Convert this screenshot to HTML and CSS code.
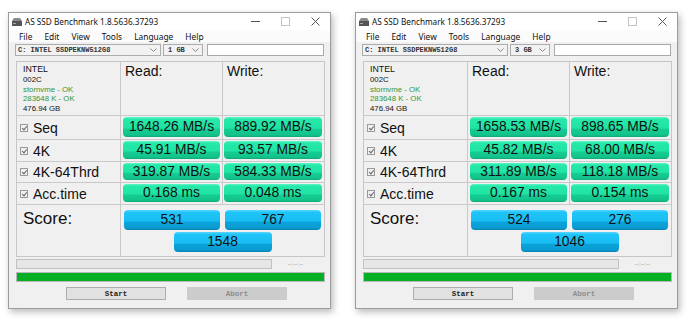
FILE: index.html
```html
<!DOCTYPE html>
<html>
<head>
<meta charset="utf-8">
<link rel="stylesheet" href="styles.css">
</head>
<body>
<div class="page">
  <div class="win">
    <div class="titlebar">
      <svg class="appicon" width="10" height="8" viewBox="0 0 10 8"><polygon points="2,0 8,0 10,3 0,3" fill="#8a8a8a"/><rect x="0" y="3" width="10" height="5" fill="#555"/><rect x="1" y="5" width="3" height="1" fill="#aaa"/></svg>
      <span class="title">AS SSD Benchmark 1.8.5636.37293</span>
      <div class="ctrls">
        <span class="ctl"><svg width="9" height="9" viewBox="0 0 9 9"><line x1="0" y1="4.5" x2="9" y2="4.5" stroke="#555" stroke-width="1"/></svg></span>
        <span class="ctl"><svg width="9" height="9" viewBox="0 0 9 9"><rect x="0.5" y="0.5" width="8" height="8" fill="none" stroke="#c4c4c4" stroke-width="1"/></svg></span>
        <span class="ctl"><svg width="9" height="9" viewBox="0 0 9 9"><path d="M0.5 0.5 L8.5 8.5 M8.5 0.5 L0.5 8.5" stroke="#555" stroke-width="1"/></svg></span>
      </div>
    </div>
    <div class="menubar"><span>File</span><span>Edit</span><span>View</span><span>Tools</span><span>Language</span><span>Help</span></div>
    <div class="body">
      <div class="selrow">
        <div class="sel drive"><span>C: INTEL SSDPEKNW512G8</span><svg class="chev" width="7" height="4" viewBox="0 0 7 4"><path d="M0.5 0.5 L3.5 3.5 L6.5 0.5" fill="none" stroke="#888" stroke-width="1"/></svg></div>
        <div class="sel size"><span>1 GB</span><svg class="chev" width="7" height="4" viewBox="0 0 7 4"><path d="M0.5 0.5 L3.5 3.5 L6.5 0.5" fill="none" stroke="#888" stroke-width="1"/></svg></div>
        <div class="textbox"></div>
      </div>
      <div class="panel">
        <div class="info">
          <div class="i1">INTEL</div>
          <div class="i2">002C</div>
          <div class="i2 ok">stornvme - OK</div>
          <div class="i2 ok">283648 K - OK</div>
          <div class="i2">476.94 GB</div>
        </div>
        <div class="hdr">Read:</div>
        <div class="hdr">Write:</div>
        <div class="label"><i class="cb"></i>Seq</div>
        <div class="cell"><div class="bar g">1648.26 MB/s</div></div>
        <div class="cell"><div class="bar g">889.92 MB/s</div></div>
        <div class="label"><i class="cb"></i>4K</div>
        <div class="cell"><div class="bar g">45.91 MB/s</div></div>
        <div class="cell"><div class="bar g">93.57 MB/s</div></div>
        <div class="label"><i class="cb"></i>4K-64Thrd</div>
        <div class="cell"><div class="bar g">319.87 MB/s</div></div>
        <div class="cell"><div class="bar g">584.33 MB/s</div></div>
        <div class="label"><i class="cb"></i>Acc.time</div>
        <div class="cell"><div class="bar g">0.168 ms</div></div>
        <div class="cell"><div class="bar g">0.048 ms</div></div>
        <div class="label score">Score:</div>
        <div class="scorecell">
          <div class="scoretop"><div class="bar b">531</div><div class="bar b">767</div></div>
          <div class="bar b total">1548</div>
        </div>
      </div>
      <div class="progrow"><div class="prog"></div><span class="eta">--:--:--</span></div>
      <div class="greenbar"></div>
      <div class="btnrow"><div class="btn">Start</div><div class="btn dis">Abort</div></div>
    </div>
  </div>

  <div class="win">
    <div class="titlebar">
      <svg class="appicon" width="10" height="8" viewBox="0 0 10 8"><polygon points="2,0 8,0 10,3 0,3" fill="#8a8a8a"/><rect x="0" y="3" width="10" height="5" fill="#555"/><rect x="1" y="5" width="3" height="1" fill="#aaa"/></svg>
      <span class="title">AS SSD Benchmark 1.8.5636.37293</span>
      <div class="ctrls">
        <span class="ctl"><svg width="9" height="9" viewBox="0 0 9 9"><line x1="0" y1="4.5" x2="9" y2="4.5" stroke="#555" stroke-width="1"/></svg></span>
        <span class="ctl"><svg width="9" height="9" viewBox="0 0 9 9"><rect x="0.5" y="0.5" width="8" height="8" fill="none" stroke="#c4c4c4" stroke-width="1"/></svg></span>
        <span class="ctl"><svg width="9" height="9" viewBox="0 0 9 9"><path d="M0.5 0.5 L8.5 8.5 M8.5 0.5 L0.5 8.5" stroke="#555" stroke-width="1"/></svg></span>
      </div>
    </div>
    <div class="menubar"><span>File</span><span>Edit</span><span>View</span><span>Tools</span><span>Language</span><span>Help</span></div>
    <div class="body">
      <div class="selrow">
        <div class="sel drive"><span>C: INTEL SSDPEKNW512G8</span><svg class="chev" width="7" height="4" viewBox="0 0 7 4"><path d="M0.5 0.5 L3.5 3.5 L6.5 0.5" fill="none" stroke="#888" stroke-width="1"/></svg></div>
        <div class="sel size"><span>3 GB</span><svg class="chev" width="7" height="4" viewBox="0 0 7 4"><path d="M0.5 0.5 L3.5 3.5 L6.5 0.5" fill="none" stroke="#888" stroke-width="1"/></svg></div>
        <div class="textbox"></div>
      </div>
      <div class="panel">
        <div class="info">
          <div class="i1">INTEL</div>
          <div class="i2">002C</div>
          <div class="i2 ok">stornvme - OK</div>
          <div class="i2 ok">283648 K - OK</div>
          <div class="i2">476.94 GB</div>
        </div>
        <div class="hdr">Read:</div>
        <div class="hdr">Write:</div>
        <div class="label"><i class="cb"></i>Seq</div>
        <div class="cell"><div class="bar g">1658.53 MB/s</div></div>
        <div class="cell"><div class="bar g">898.65 MB/s</div></div>
        <div class="label"><i class="cb"></i>4K</div>
        <div class="cell"><div class="bar g">45.82 MB/s</div></div>
        <div class="cell"><div class="bar g">68.00 MB/s</div></div>
        <div class="label"><i class="cb"></i>4K-64Thrd</div>
        <div class="cell"><div class="bar g">311.89 MB/s</div></div>
        <div class="cell"><div class="bar g">118.18 MB/s</div></div>
        <div class="label"><i class="cb"></i>Acc.time</div>
        <div class="cell"><div class="bar g">0.167 ms</div></div>
        <div class="cell"><div class="bar g">0.154 ms</div></div>
        <div class="label score">Score:</div>
        <div class="scorecell">
          <div class="scoretop"><div class="bar b">524</div><div class="bar b">276</div></div>
          <div class="bar b total">1046</div>
        </div>
      </div>
      <div class="progrow"><div class="prog"></div><span class="eta">--:--:--</span></div>
      <div class="greenbar"></div>
      <div class="btnrow"><div class="btn">Start</div><div class="btn dis">Abort</div></div>
    </div>
  </div>
</div>
</body>
</html>
```

FILE: styles.css
```css
* { box-sizing: border-box; }
html, body { margin: 0; padding: 0; background: #fff; }
body { width: 692px; height: 324px; overflow: hidden; font-family: "Liberation Sans", Arial, sans-serif; }

.page {
  display: flex;
  gap: 24px;
  padding: 12px 0 0 8px;
}

.win {
  width: 323px;
  height: 297px;
  border: 1px solid #9c9c9c;
  background: #f0f0f0;
  box-shadow: 2px 3px 7px rgba(0,0,0,0.28);
  display: flex;
  flex-direction: column;
}

.titlebar {
  height: 17px;
  background: #fff;
  display: flex;
  align-items: center;
  padding-left: 3px;
}
.appicon { display: block; margin-top: 1px; }
.title {
  font-family: "Noto Sans", "Open Sans", sans-serif;
  font-size: 8.2px;
  color: #111;
  margin-left: 3px;
}
.ctrls { margin-left: auto; display: flex; }
.ctl { width: 30px; height: 17px; display: flex; align-items: center; justify-content: center; }

.menubar {
  height: 12px;
  background: #fbfbfb;
  display: flex;
  align-items: center;
  padding-left: 4px;
  font-family: "Noto Sans", "Open Sans", sans-serif;
  font-size: 8.4px;
  color: #111;
}
.menubar span { padding: 0 6px; }

.body {
  flex: 1;
  display: flex;
  flex-direction: column;
  padding: 2px 5px 0 6px;
}

.selrow { display: flex; height: 12px; }
.sel {
  height: 12px;
  border: 1px solid #acacac;
  background: #f2f2f2;
  display: flex;
  align-items: center;
  padding-left: 2px;
  font-family: "Liberation Mono", monospace;
  font-weight: bold;
  font-size: 7px;
  color: #333;
}
.sel .chev { margin-left: auto; margin-right: 3px; }
.drive { width: 146px; }
.size { width: 40px; margin-left: 2px; padding-left: 4px; }
.textbox {
  flex: 1;
  margin-left: 4px;
  margin-right: 1px;
  height: 12px;
  border: 1px solid #a9a9a9;
  background: #fff;
}

.panel {
  margin-top: 5px;
  margin-left: 1px;
  width: 309px;
  border: 1px solid #c6c6c6;
  background: #c9c9c9;
  display: grid;
  grid-template-columns: 103px 101px 101px;
  grid-template-rows: 53px 23px 21px 20px 21px 51px;
  gap: 1px;
}
.panel > div { background: #f0f0f0; }

.info { padding: 2px 0 0 6px; color: #111; }
.i1 { font-size: 8.8px; line-height: 11px; }
.i2 { font-size: 7.8px; line-height: 9.5px; }
.ok { color: #32973a; }

.hdr { font-size: 14px; line-height: 16px; padding: 1px 0 0 4px; color: #111; }

.label {
  display: flex;
  align-items: center;
  padding-left: 3px;
  font-size: 14px;
  color: #111;
}
.cb {
  width: 8px;
  height: 8px;
  border: 1px solid #9a9a9a;
  margin-right: 5px;
  position: relative;
}
.cb::after {
  content: "";
  position: absolute;
  left: 1.5px;
  top: 0px;
  width: 2px;
  height: 4px;
  border-right: 1px solid #666;
  border-bottom: 1px solid #666;
  transform: rotate(40deg);
}
.label.score { align-items: flex-start; font-size: 17px; padding: 4px 0 0 6px; }

.cell { display: flex; padding: 1px 2px 2px 2px; }
.cell + .cell { padding-left: 1px; }

.bar {
  flex: 1;
  border-radius: 4px;
  display: flex;
  align-items: center;
  justify-content: center;
  font-size: 13.8px;
  color: #111;
  line-height: 1;
}
.bar.g {
  background: linear-gradient(to bottom, #5ef5c8 0, #25e8a9 12%, #20e4a4 55%, #15cc92 62%, #12c38b 90%, #0ea575 100%);
}
.bar.b {
  background: linear-gradient(to bottom, #5bd6ff 0, #1fc4f8 12%, #19bdf3 55%, #0aa3d9 62%, #0a9bd1 90%, #087fb0 100%);
  height: 20px;
  width: 96px;
  flex: none;
}

.scorecell {
  grid-column: 2 / 4;
  display: flex;
  flex-direction: column;
  align-items: center;
  padding-top: 5px;
}
.scoretop { display: flex; gap: 5px; }
.bar.total { width: 98px; margin-top: 2px; }

.progrow { display: flex; align-items: center; margin-top: 2px; height: 10px; margin-left: 1px; }
.prog { width: 256px; height: 10px; border: 1px solid #c2c2c2; background: #e6e6e6; }
.eta { font-size: 5px; color: #777; margin-left: 16px; letter-spacing: 0.3px; }

.greenbar {
  margin-top: 3px;
  margin-left: 1px;
  width: 309px;
  height: 10px;
  border: 1px solid #b8b8b8;
  background: #06b025;
}

.btnrow { display: flex; margin-top: 5px; padding-left: 51px; gap: 21px; }
.btn {
  width: 100px;
  height: 13px;
  border: 1px solid #adadad;
  background: #e1e1e1;
  display: flex;
  align-items: center;
  justify-content: center;
  font-family: "Liberation Mono", monospace;
  font-weight: bold;
  font-size: 7.5px;
  color: #222;
}
.btn.dis { background: #cccccc; border-color: #cccccc; color: #8c8c8c; }
```
